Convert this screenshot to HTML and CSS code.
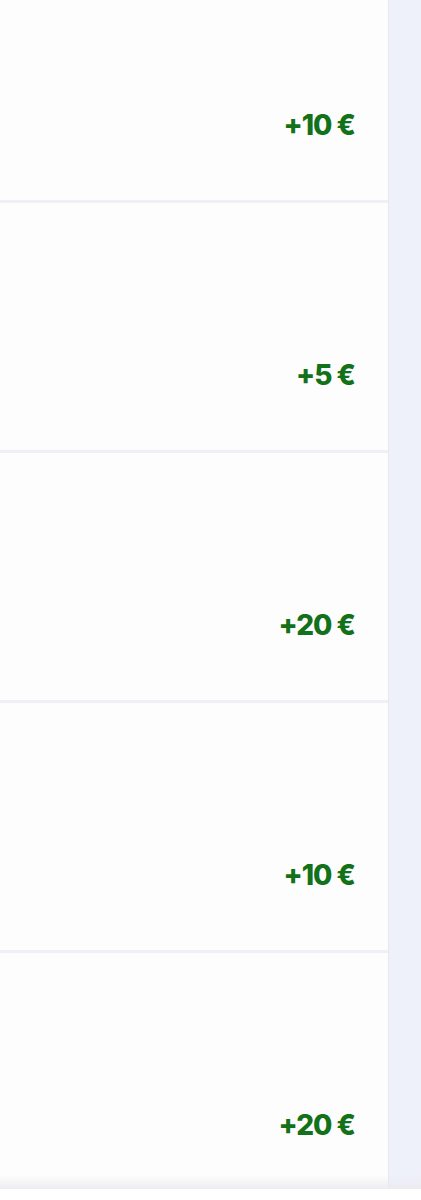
FILE: index.html
```html
<!DOCTYPE html>
<html lang="en">

<head>
    <meta charset="UTF-8">
    <meta name="viewport" content="width=device-width, initial-scale=1.0">
    <title>Transactions</title>
    <link rel="stylesheet" href="styles.css">
</head>

<body>
    <div class="page">
        <!-- Transaction list -->
        <main class="list">
            <div class="row"><span class="amount">+10 €</span></div>
            <div class="row"><span class="amount">+5 €</span></div>
            <div class="row"><span class="amount">+20 €</span></div>
            <div class="row"><span class="amount">+10 €</span></div>
            <div class="row"><span class="amount">+20 €</span></div>
        </main>
        <aside class="side"></aside>
    </div>
</body>

</html>
```

FILE: styles.css
```css
/* Basic Styles */
body {
    margin: 0;
    padding: 0;
    background-color: #fff;
    font-family: Inter, "Liberation Sans", Arial, sans-serif;
}

.page {
    display: flex;
    height: 1189px;
    overflow: hidden;
    position: relative;
}

.page::after {
    content: "";
    position: absolute;
    left: 0;
    right: 0;
    bottom: 0;
    height: 14px;
    background: linear-gradient(rgba(235, 235, 240, 0), rgba(235, 235, 240, 0.9));
}

.list {
    width: 388px;
    display: flex;
    flex-direction: column;
    gap: 3px;
    margin-top: -47px;
    background-color: #efeff5;
    border-right: 1px solid #e6e7ef;
}

.row {
    height: 247px;
    flex-shrink: 0;
    display: flex;
    align-items: flex-end;
    justify-content: flex-end;
    padding: 0 33px 59px 0;
    box-sizing: border-box;
    background-color: #fdfdfd;
}

.amount {
    font-size: 28px;
    line-height: 32px;
    font-weight: 800;
    letter-spacing: -1px;
    color: #13711a;
}

.side {
    flex: 1;
    background-color: #eef0fa;
}
```
